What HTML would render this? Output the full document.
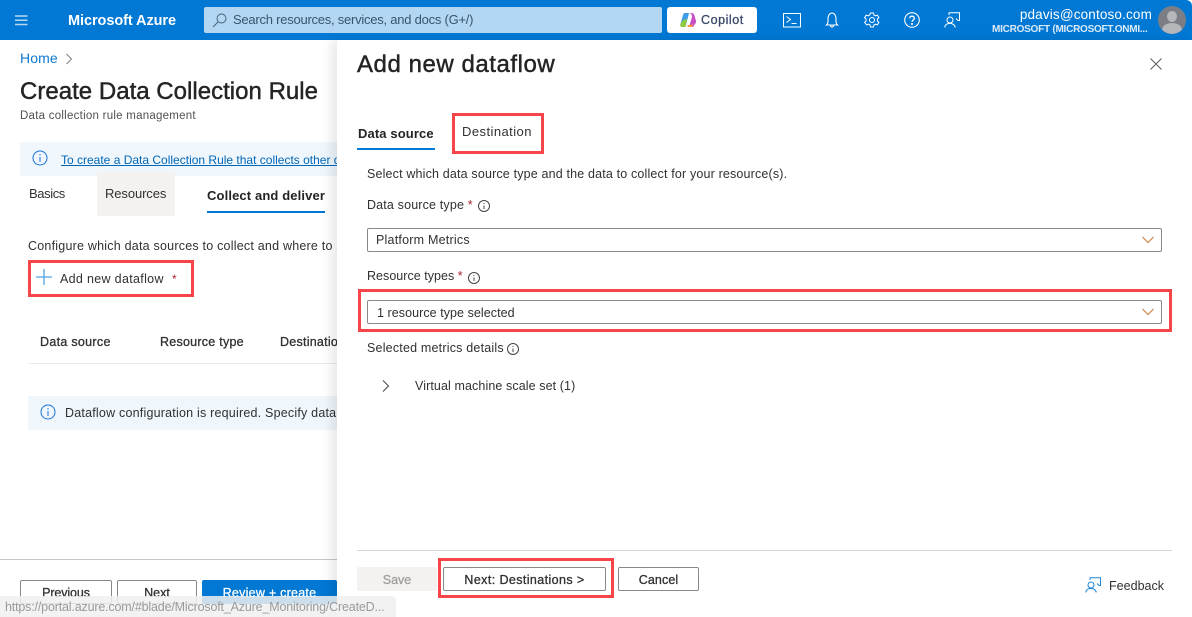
<!DOCTYPE html>
<html lang="en"><head><meta charset="utf-8"><title>Create Data Collection Rule</title>
<style>
html,body{margin:0;padding:0;width:1192px;height:617px;overflow:hidden;background:#fff}
body{position:relative;font-family:"Liberation Sans",sans-serif;font-size:13px;color:#323130}
.a{position:absolute}
.t{position:absolute;white-space:nowrap;line-height:20px;height:20px}
.b{font-weight:bold}
.red{position:absolute;border:3px solid #f8454a;box-sizing:border-box}
.btn{position:absolute;box-sizing:border-box;border:1px solid #8a8886;border-radius:2px;background:#fff;text-align:center;font-size:12.5px;line-height:25px;color:#323130;-webkit-text-stroke:.3px currentColor}
.sel{position:absolute;box-sizing:border-box;border:1px solid #8a8886;border-radius:2px;background:#fff}
svg{position:absolute;overflow:visible}
</style></head><body>

<div class="a" style="left:0;top:0;width:1192px;height:40px;background:#0078d4;border-top-right-radius:6px"></div>
<svg style="left:15px;top:15px" width="13" height="11"><path d="M0 1h12.500M0 5.250h12.500M0 9.500h12.500" stroke="#b8d8f2" stroke-width="1.400" fill="none"/></svg>
<div class="t b" style="left:68px;top:11px;font-size:14.5px;color:#fff;letter-spacing:-.07px">Microsoft Azure</div>
<div class="a" style="left:204px;top:7px;width:458px;height:26px;background:#b3d6f2;border-radius:2px"></div>
<svg style="left:212px;top:12px" width="16" height="16" fill="none" stroke="#3f5d76" stroke-width=".9"><circle cx="9.500" cy="6.500" r="4.500"/><path d="M6 10l-5 5"/></svg>
<div class="t" style="left:233px;top:10px;font-size:13px;color:#36566f;letter-spacing:-.24px">Search resources, services, and docs (G+/)</div>
<div class="a" style="left:667px;top:7px;width:90px;height:26px;background:#fff;border-radius:3px"></div>
<svg style="left:680px;top:12px" width="16" height="16" viewBox="0 0 16 16"><path d="M5 1h4L6 13c-.3 1-1 2-2.500 2H2C.5 15 0 13.500.5 12L3 3c.3-1 1-2 2-2z" fill="#3d9bea"/><path d="M9 1h2.500C13 1 14 2 14.500 3.500L16 9c.2 1 0 2-1 3l-2 3H9l3-10c.2-1-.5-4-3-4z" fill="#c64fc4"/><path d="M3 8l4-1-1.500 8H2C.5 15 0 13.500.5 12z" fill="#8fc93f"/><path d="M7 13h3c2 0 3-1 3.500-2.500L12 15H8z" fill="#f59a3a"/></svg>
<div class="t" style="left:701px;top:10px;font-size:12.5px;color:#3b4a6b;-webkit-text-stroke:.3px #3b4a6b;letter-spacing:.55px">Copilot</div>

<svg style="left:783px;top:13px" width="19" height="15" fill="none" stroke="#fff" stroke-width="1"><rect x=".5" y=".5" width="17" height="13.500"/><path d="M3.500 3.500l4 3-4 3M8.500 10.500h5"/></svg>
<svg style="left:825px;top:12px" width="14" height="16" fill="none" stroke="#fff" stroke-width="1.100"><path d="M1.500 13c1.500-1.500 1.500-2.500 1.500-6C3 3.500 4.500 1 7 1s4 2.500 4 6c0 3.500 0 4.500 1.500 6zM5.500 13.500c0 2 3 2 3 0"/></svg>
<svg style="left:864px;top:12px" width="16" height="16" viewBox="0 0 16 16" fill="none" stroke="#fff" stroke-width="1"><path d="M6.500 1h3l.4 2 1.500.8 2-.7 1.500 2.600-1.500 1.400v1.800l1.500 1.400-1.500 2.600-2-.7-1.500.8-.4 2h-3l-.4-2-1.500-.8-2 .7L.6 10.300l1.500-1.400V7.100L.6 5.700l1.500-2.600 2 .7 1.500-.8z"/><circle cx="8" cy="8" r="2.500"/></svg>
<svg style="left:904px;top:12px" width="16" height="16" fill="none" stroke="#fff" stroke-width="1.100"><circle cx="8" cy="8" r="7.300"/><path d="M5.700 6.200C5.700 3.500 10.300 3.500 10.300 6.200c0 1.800-2.300 1.800-2.300 3.800" stroke-width="1.300"/><circle cx="8" cy="12" r=".5" fill="#fff"/></svg>
<svg style="left:944px;top:12px" width="17" height="16" fill="none" stroke="#fff" stroke-width="1"><circle cx="6" cy="8" r="3"/><path d="M.8 15.500c0-5.500 10-5.500 10.400 0M5 3V.8h10.500v7.700H14l-2-2"/></svg>

<div class="t" style="right:40px;top:5px;font-size:13.5px;color:#fff;letter-spacing:.16px">pdavis@contoso.com</div>
<div class="t b" style="left:992px;top:20px;font-size:10px;color:#dbeaf7;letter-spacing:-.24px">MICROSOFT (MICROSOFT.ONMI...</div>
<div class="a" style="left:1158px;top:6px;width:28px;height:28px;border-radius:50%;background:#7b7f85;overflow:hidden">
<div class="a" style="left:9px;top:5px;width:10px;height:11px;border-radius:50%;background:#b5b7ba"></div>
<div class="a" style="left:4px;top:17px;width:20px;height:14px;border-radius:50%;background:#b5b7ba"></div></div>

<div class="t" style="left:20px;top:48px;font-size:14px;color:#0f78d0;letter-spacing:.1px">Home</div>
<svg style="left:65px;top:53px" width="8" height="12" fill="none" stroke="#777" stroke-width=".9"><path d="M1.500 1l5 5-5 5"/></svg>
<div class="t" style="left:20px;top:81px;font-size:24px;line-height:22px;color:#252423;-webkit-text-stroke:.45px #252423;letter-spacing:.02px">Create Data Collection Rule</div>
<div class="t" style="left:20px;top:106px;font-size:11.5px;color:#53514f;letter-spacing:.25px">Data collection rule management</div>

<div class="a" style="left:20px;top:142px;width:317px;height:34px;background:#eff6fc"></div>
<svg style="left:32px;top:150px" width="16" height="16" fill="none" stroke="#1a73d9"><circle cx="8" cy="8" r="7"/><path d="M8 7v5M8 4v1.500"/></svg>
<div class="a" style="left:61px;top:150px;width:276px;overflow:hidden;height:20px"><span style="white-space:nowrap;line-height:20px;font-size:12px;color:#0067b8;text-decoration:underline;letter-spacing:0">To create a Data Collection Rule that collects other data types, use the</span></div>

<div class="t" style="left:29px;top:184px;color:#323130;letter-spacing:-.4px">Basics</div>
<div class="a" style="left:97px;top:172px;width:78px;height:44px;background:#f3f2f1"></div>
<div class="t" style="left:105px;top:184px;color:#323130;letter-spacing:-.1px">Resources</div>
<div class="t b" style="left:207px;top:186px;font-size:13px;color:#252423;letter-spacing:.13px">Collect and deliver</div>
<div class="a" style="left:207px;top:211px;width:118px;height:2px;background:#0078d4"></div>
<div class="t" style="left:28px;top:236px;width:309px;overflow:hidden;font-size:12.5px;letter-spacing:.22px">Configure which data sources to collect and where to send it</div>

<div class="red" style="left:28px;top:260px;width:166px;height:37px"></div>
<svg style="left:36px;top:269px" width="16" height="16" stroke="#4fa3e3" stroke-width="1.300"><path d="M0 8h16M8 0v16"/></svg>
<div class="t" style="left:60px;top:269px;font-size:12.5px;letter-spacing:.32px">Add new dataflow</div>
<div class="t" style="left:172px;top:269px;font-size:12px;color:#a4262c">*</div>

<div class="t" style="left:40px;top:332px;font-size:12.5px;letter-spacing:.3px;-webkit-text-stroke:.3px #323130">Data source</div>
<div class="t" style="left:160px;top:332px;font-size:12.5px;letter-spacing:.25px;-webkit-text-stroke:.3px #323130">Resource type</div>
<div class="t" style="left:280px;top:332px;width:57px;overflow:hidden;font-size:12.5px;letter-spacing:.25px;-webkit-text-stroke:.3px #323130">Destination(s)</div>
<div class="a" style="left:28px;top:363px;width:309px;height:1px;background:#edebe9"></div>

<div class="a" style="left:28px;top:396px;width:309px;height:34px;background:#eff6fc"></div>
<svg style="left:40px;top:404px" width="16" height="16" fill="none" stroke="#1a73d9"><circle cx="8" cy="8" r="7"/><path d="M8 7v5M8 4v1.500"/></svg>
<div class="t" style="left:65px;top:403px;width:272px;overflow:hidden;font-size:12.5px;letter-spacing:.21px">Dataflow configuration is required. Specify data sources</div>

<div class="a" style="left:0;top:559px;width:337px;height:1px;background:#c8c6c4"></div>
<div class="btn" style="left:20px;top:580px;width:92px;height:24px;letter-spacing:-.1px">Previous</div>
<div class="btn" style="left:117px;top:580px;width:80px;height:24px">Next</div>
<div class="btn" style="left:202px;top:580px;width:135px;height:24px;background:#0078d4;border-color:#0078d4;color:#fff;letter-spacing:.25px">Review + create</div>

<div class="a" style="left:337px;top:40px;width:855px;height:577px;background:#fff;box-shadow:-6px 0 10px rgba(0,0,0,.09)"></div>

<div class="t" style="left:357px;top:54px;font-size:24px;line-height:22px;height:22px;-webkit-text-stroke:.45px #252423;color:#252423;letter-spacing:.55px">Add new dataflow</div>
<svg style="left:1150px;top:58px" width="12" height="12" stroke="#555" stroke-width=".9"><path d="M.5.5l11 11M11.500.5l-11 11"/></svg>

<div class="t b" style="left:358px;top:124px;font-size:13px;color:#252423;letter-spacing:.12px">Data source</div>
<div class="a" style="left:357px;top:148px;width:78px;height:2px;background:#0078d4"></div>
<div class="red" style="left:452px;top:113px;width:92px;height:41px"></div>
<div class="t" style="left:462px;top:122px;font-size:13px;letter-spacing:.44px">Destination</div>

<div class="t" style="left:367px;top:164px;font-size:12.5px;letter-spacing:.165px">Select which data source type and the data to collect for your resource(s).</div>
<div class="t" style="left:367px;top:195px;font-size:12.5px;letter-spacing:.16px">Data source type <span style="color:#a4262c">*</span></div>
<svg style="left:478px;top:200px" width="12" height="12" fill="none" stroke="#444"><circle cx="6" cy="6" r="5.500"/><path d="M6 5.500v3.500M6 3v1"/></svg>
<div class="sel" style="left:367px;top:228px;width:795px;height:24px"></div>
<div class="t" style="left:376px;top:230px;font-size:12.5px;letter-spacing:.22px">Platform Metrics</div>
<svg style="left:1142px;top:236px" width="12" height="8" fill="none" stroke="#c8803c" stroke-width="1.100"><path d="M.5 1l5.500 5.500L11.500 1"/></svg>

<div class="t" style="left:367px;top:266px;font-size:12.5px;letter-spacing:.03px">Resource types <span style="color:#a4262c">*</span></div>
<svg style="left:468px;top:272px" width="12" height="12" fill="none" stroke="#444"><circle cx="6" cy="6" r="5.500"/><path d="M6 5.500v3.500M6 3v1"/></svg>
<div class="red" style="left:358px;top:289px;width:814px;height:43px"></div>
<div class="sel" style="left:367px;top:300px;width:795px;height:24px"></div>
<div class="t" style="left:377px;top:303px;font-size:12.5px;letter-spacing:.06px">1 resource type selected</div>
<svg style="left:1142px;top:308px" width="12" height="8" fill="none" stroke="#c8803c" stroke-width="1.100"><path d="M.5 1l5.500 5.500L11.500 1"/></svg>

<div class="t" style="left:367px;top:338px;font-size:12.5px;letter-spacing:.2px">Selected metrics details</div>
<svg style="left:507px;top:343px" width="12" height="12" fill="none" stroke="#444"><circle cx="6" cy="6" r="5.500"/><path d="M6 5.500v3.500M6 3v1"/></svg>
<svg style="left:382px;top:380px" width="8" height="12" fill="none" stroke="#444" stroke-width="1"><path d="M1 .5l5.500 5.500L1 11.500"/></svg>
<div class="t" style="left:415px;top:376px;font-size:12.5px;letter-spacing:.1px">Virtual machine scale set (1)</div>

<div class="a" style="left:357px;top:550px;width:815px;height:1px;background:#d6d6d6"></div>
<div class="btn" style="left:357px;top:567px;width:80px;height:24px;background:#f3f2f1;border-color:#f3f2f1;color:#a19f9d">Save</div>
<div class="red" style="left:438px;top:558px;width:176px;height:40px"></div>
<div class="btn" style="left:443px;top:567px;width:163px;height:24px;letter-spacing:.4px">Next: Destinations &gt;</div>
<div class="btn" style="left:618px;top:567px;width:81px;height:24px;letter-spacing:.1px">Cancel</div>
<svg style="left:1085px;top:577px" width="17" height="16" fill="none" stroke="#1f86d8" stroke-width="1"><circle cx="6" cy="8" r="3"/><path d="M.8 15.500c0-5.500 10-5.500 10.400 0M5 3V.8h10.500v7.700H14l-2-2"/></svg>
<div class="t" style="left:1109px;top:576px;font-size:12.5px;letter-spacing:.02px">Feedback</div>

<div class="a" style="left:0;top:596px;width:396px;height:21px;background:rgba(240,240,240,.85);border-top-right-radius:4px"></div>
<div class="t" style="left:5px;top:597px;font-size:12.5px;color:#9a9a9a;letter-spacing:-.17px">https://portal.azure.com/#blade/Microsoft_Azure_Monitoring/CreateD...</div>
</body></html>
